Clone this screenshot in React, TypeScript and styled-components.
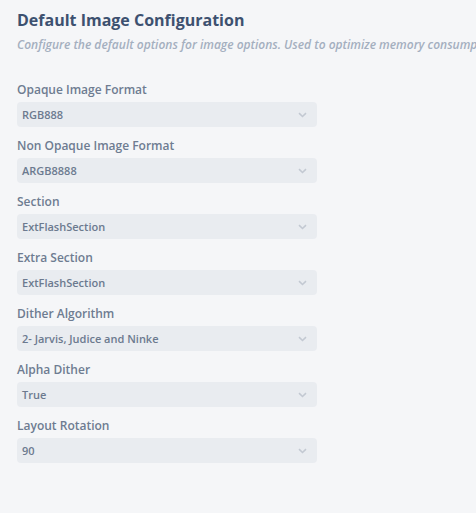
import React from "react";
import styled, { createGlobalStyle } from "styled-components";

const Global = createGlobalStyle`
  html, body { margin: 0; padding: 0; background: #f5f6f8; }
  body { font-family: "Open Sans", "Noto Sans", sans-serif; }
`;

const Page = styled.div`
  width: 476px;
  height: 513px;
  overflow: hidden;
  box-sizing: border-box;
  padding: 9px 0 0 17px;
  background: #f5f6f8;
`;

const Title = styled.h1`
  margin: 0;
  font-size: 16px;
  line-height: 22px;
  font-weight: 700;
  color: #3d5170;
  white-space: nowrap;
`;

const Description = styled.p`
  margin: 6px 0 0;
  font-size: 12px;
  line-height: 16px;
  font-style: italic;
  font-weight: 600;
  color: #a4afbf;
  white-space: nowrap;
`;

const Form = styled.div`
  display: flex;
  flex-direction: column;
  gap: 11px;
  margin-top: 29px;
  width: 300px;
`;

const Field = styled.div`
  display: flex;
  flex-direction: column;
  gap: 4px;
`;

const Label = styled.label`
  font-size: 12px;
  line-height: 16px;
  font-weight: 600;
  color: #6e7c91;
`;

const Select = styled.div`
  height: 25px;
  border-radius: 4px;
  background: #e9ecf0;
  display: flex;
  align-items: center;
  justify-content: space-between;
  padding: 0 10px 0 5px;
`;

const Value = styled.span`
  font-size: 11px;
  font-weight: 600;
  color: #6c7a8f;
`;

const Chevron = () => (
  <svg width="9" height="6" viewBox="0 0 9 6" fill="none">
    <path d="M1 1.2 L4.5 4.5 L8 1.2" stroke="#c3c9d2" strokeWidth="1.6" />
  </svg>
);

const fields: [string, string][] = [
  ["Opaque Image Format", "RGB888"],
  ["Non Opaque Image Format", "ARGB8888"],
  ["Section", "ExtFlashSection"],
  ["Extra Section", "ExtFlashSection"],
  ["Dither Algorithm", "2- Jarvis, Judice and Ninke"],
  ["Alpha Dither", "True"],
  ["Layout Rotation", "90"],
];

export default function App() {
  return (
    <Page>
      <Global />
      <Title>Default Image Configuration</Title>
      <Description>
        Configure the default options for image options. Used to optimize memory consumption and performance.
      </Description>
      <Form>
        {fields.map(([l, v]) => (
          <Field key={l}>
            <Label>{l}</Label>
            <Select>
              <Value>{v}</Value>
              <Chevron />
            </Select>
          </Field>
        ))}
      </Form>
    </Page>
  );
}
